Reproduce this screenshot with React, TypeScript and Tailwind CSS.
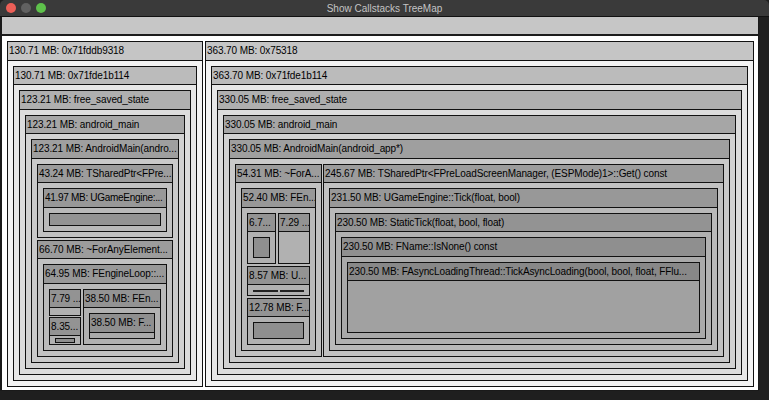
import React from 'react';

// header / body fills per nesting depth
const HEAD = [
  'bg-[#c5c5c5]',
  'bg-[#bbbbbb]',
  'bg-[#afafaf]',
  'bg-[#a6a6a6]',
  'bg-[#9f9f9f]',
  'bg-[#9c9c9c]',
  'bg-[#989898]',
  'bg-[#939393]',
  'bg-[#8f8f8f]',
  'bg-[#888888]',
];

const BODY = [
  'bg-[#f3f3f3]',
  'bg-[#e7e7e7]',
  'bg-[#dcdcdc]',
  'bg-[#d2d2d2]',
  'bg-[#c9c9c9]',
  'bg-[#c1c1c1]',
  'bg-[#b9b9b9]',
  'bg-[#b1b1b1]',
  'bg-[#a9a9a9]',
  'bg-[#a1a1a1]',
];

const HEAD_H = ['h-[19px]', 'h-[18px]'];

type BoxProps = {
  depth: number;
  label: string;
  className?: string;
  body?: string;
  tight?: boolean;
  children?: React.ReactNode;
};

function Box({ depth, label, className = '', body = 'flex flex-col gap-[2px] p-[5px]', tight, children }: BoxProps) {
  return (
    <div className={`flex min-h-0 min-w-0 flex-col border border-[#111] ${BODY[depth]} ${className}`}>
      <div
        className={`${HEAD_H[depth % 2]} ${HEAD[depth]} ${tight ? 'tracking-[-0.3px]' : 'tracking-[-0.1px]'} flex shrink-0 items-center overflow-hidden whitespace-nowrap border-b border-[#111] pl-[1px] text-[10px] leading-none text-black`}
      >
        {label}
      </div>
      <div className={`min-h-0 flex-1 ${body}`}>{children}</div>
    </div>
  );
}

// node too small to show a label: just a filled block
function Tiny({ depth, className = '' }: { depth: number; className?: string }) {
  return <div className={`border border-[#111] ${HEAD[depth]} ${className}`} />;
}

function LeftTree() {
  return (
    <Box depth={0} label="130.71 MB: 0x71fddb9318" className="w-[196px] shrink-0">
      <Box depth={1} label="130.71 MB: 0x71fde1b114" className="flex-1">
        <Box depth={2} label="123.21 MB: free_saved_state" className="flex-1">
          <Box depth={3} label="123.21 MB: android_main" className="flex-1">
            <Box depth={4} label="123.21 MB: AndroidMain(andro..." className="flex-1">
              <Box depth={5} label="43.24 MB: TSharedPtr<FPre..." className="h-[74px] shrink-0">
                <Box depth={6} label="41.97 MB: UGameEngine:..." className="flex-1" tight>
                  <Tiny depth={7} className="flex-1" />
                </Box>
              </Box>
              <Box depth={5} label="66.70 MB: ~ForAnyElement..." className="flex-1">
                <Box depth={6} label="64.95 MB: FEngineLoop::..." className="flex-1" body="flex gap-[2px] p-[5px]">
                  <div className="flex w-[32px] shrink-0 flex-col gap-[1px]">
                    <Box depth={7} label="7.79 ..." className="h-[27px] shrink-0" body="" />
                    <Box depth={7} label="8.35..." className="flex-1" body="flex flex-col px-[5px] pt-[2px]">
                      <Tiny depth={8} className="h-[5px] shrink-0" />
                    </Box>
                  </div>
                  <Box depth={7} label="38.50 MB: FEn..." className="flex-1">
                    <Box depth={8} label="38.50 MB: F..." className="flex-1" body="" />
                  </Box>
                </Box>
              </Box>
            </Box>
          </Box>
        </Box>
      </Box>
    </Box>
  );
}

function RightTree() {
  return (
    <Box depth={0} label="363.70 MB: 0x75318" className="flex-1">
      <Box depth={1} label="363.70 MB: 0x71fde1b114" className="flex-1">
        <Box depth={2} label="330.05 MB: free_saved_state" className="flex-1">
          <Box depth={3} label="330.05 MB: android_main" className="flex-1">
            <Box depth={4} label="330.05 MB: AndroidMain(android_app*)" className="flex-1" body="flex gap-[1px] p-[5px]">
              <Box depth={5} label="54.31 MB: ~ForA..." className="w-[87px] shrink-0">
                <Box depth={6} label="52.40 MB: FEn..." className="flex-1">
                  <div className="flex h-[51px] shrink-0 gap-[2px]">
                    <Box depth={7} label="6.7..." className="w-[29px] shrink-0" body="flex flex-col p-[5px]">
                      <Tiny depth={8} className="flex-1" />
                    </Box>
                    <Box depth={7} label="7.29 ..." className="flex-1" body="" />
                  </div>
                  <Box depth={7} label="8.57 MB: U..." className="h-[30px] shrink-0" body="flex items-start gap-[2px] px-[5px] pt-[5px]">
                    <div className="h-[2px] flex-1 bg-[#222]" />
                    <div className="h-[2px] flex-1 bg-[#222]" />
                  </Box>
                  <Box depth={7} label="12.78 MB: F..." className="flex-1">
                    <Tiny depth={8} className="flex-1" />
                  </Box>
                </Box>
              </Box>
              <Box depth={5} label="245.67 MB: TSharedPtr<FPreLoadScreenManager, (ESPMode)1>::Get() const" className="flex-1">
                <Box depth={6} label="231.50 MB: UGameEngine::Tick(float, bool)" className="flex-1">
                  <Box depth={7} label="230.50 MB: StaticTick(float, bool, float)" className="flex-1">
                    <Box depth={8} label="230.50 MB: FName::IsNone() const" className="flex-1">
                      <Box
                        depth={9}
                        label="230.50 MB: FAsyncLoadingThread::TickAsyncLoading(bool, bool, float, FFlu..."
                        className="flex-1"
                        body=""
                      />
                    </Box>
                  </Box>
                </Box>
              </Box>
            </Box>
          </Box>
        </Box>
      </Box>
    </Box>
  );
}

export default function App() {
  return (
    <div className="flex h-[400px] w-[769px] flex-col overflow-hidden bg-[#1f1f1f] font-['Liberation_Sans',Arial,sans-serif]">
      {/* title bar */}
      <div className="relative flex h-[17px] shrink-0 items-center rounded-t-[5px] border-b border-[#111] bg-[#3a3a3a] pl-[6px]">
        <div className="flex gap-[5px]">
          <span className="h-[10px] w-[10px] rounded-full bg-[#ed5f57]" />
          <span className="h-[10px] w-[10px] rounded-full bg-[#616161]" />
          <span className="h-[10px] w-[10px] rounded-full bg-[#5ec14b]" />
        </div>
        <div className="absolute inset-0 flex items-center justify-center text-[10px] text-[#c4c4c4]">
          Show Callstacks TreeMap
        </div>
      </div>

      <div className="flex">
        <div className="flex w-[759px] shrink-0 flex-col border-b border-l-2 border-r border-[#1a1a1a]">
          {/* toolbar */}
          <div className="h-[19px] border-b-2 border-[#1c1c1c] bg-[#c6c6c6]" />
          {/* treemap canvas */}
          <div className="flex h-[354px] gap-[2px] bg-white pb-[3px] pl-[5px] pr-[4px] pt-[5px]">
            <LeftTree />
            <RightTree />
          </div>
        </div>
      </div>
    </div>
  );
}
